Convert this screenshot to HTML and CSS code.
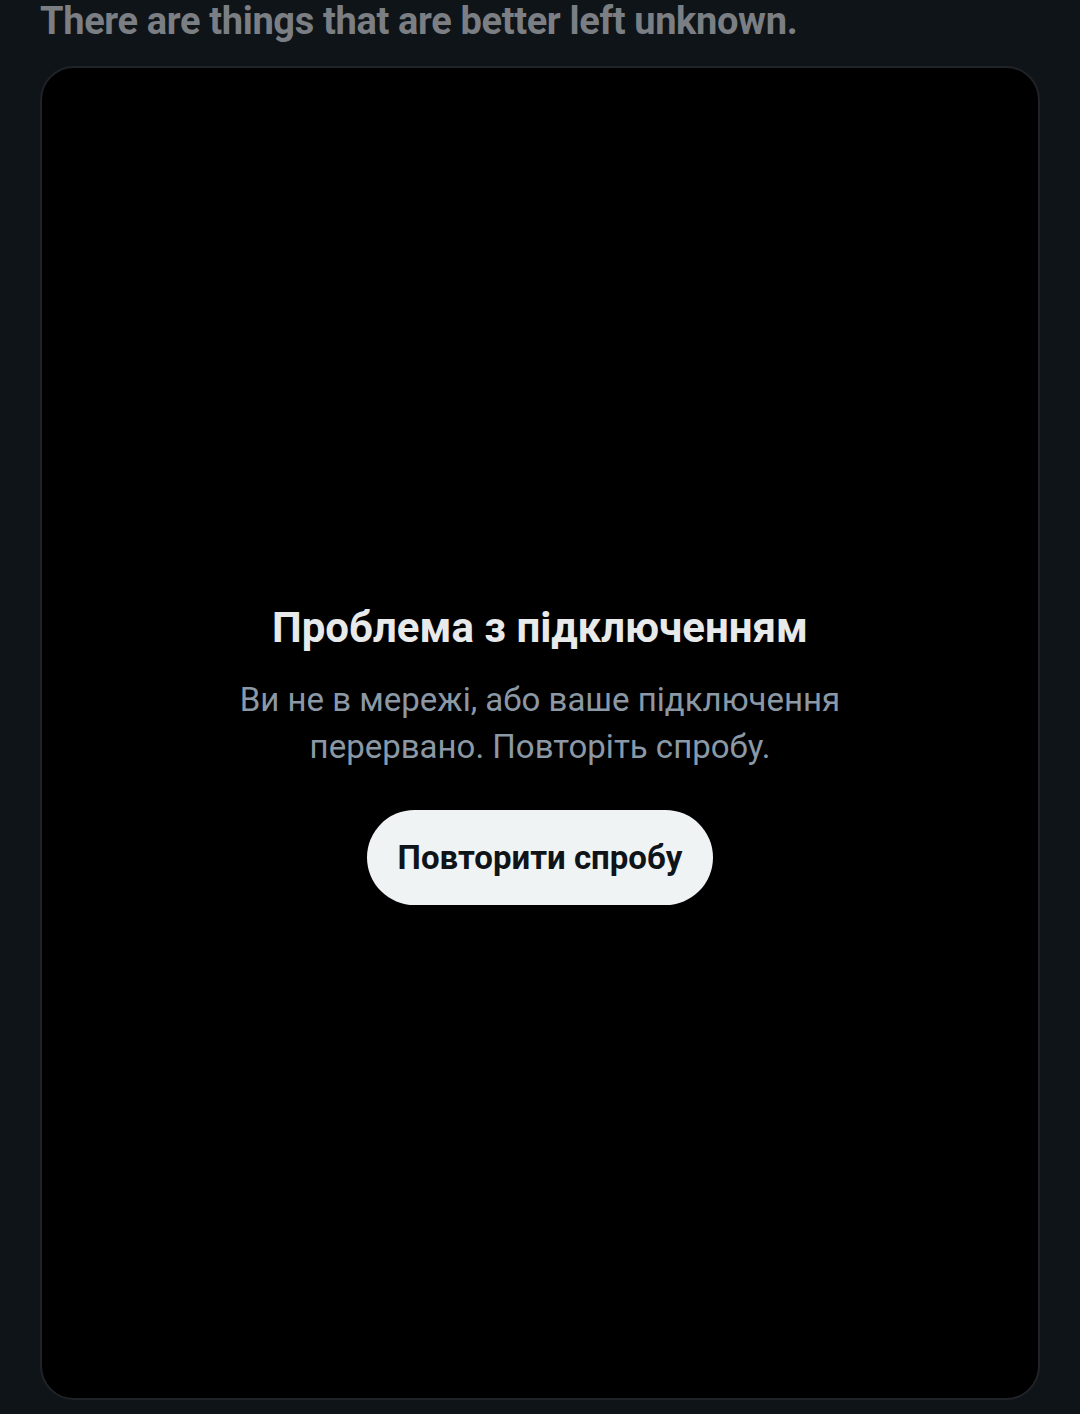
FILE: index.html
```html
<!DOCTYPE html>
<html lang="uk">
  <head>
    <meta charset="UTF-8" />
    <meta name="viewport" content="width=device-width, initial-scale=1.0" />
    <title>Проблема з підключенням</title>
    <link rel="stylesheet" href="styles.css">
  </head>
  <body>
    <div class="page">
      <p class="tweet-text">There are things that are better left unknown.</p>

      <div class="media-card">
        <div class="error-box">
          <h2>Проблема з підключенням</h2>
          <p>Ви не в мережі, або ваше підключення перервано. Повторіть спробу.</p>
          <button class="retry">Повторити спробу</button>
        </div>
      </div>
    </div>
  </body>
</html>
```

FILE: styles.css
```css
html,
body {
  margin: 0;
  padding: 0;
  background-color: #0f1419;
  font-family: Roboto, "Noto Sans", Arial, sans-serif;
}
.page {
  width: 1080px;
  height: 1414px;
  overflow: hidden;
  padding: 0 40px;
  box-sizing: border-box;
}
.tweet-text {
  margin: 0;
  height: 66px;
  font-size: 38px;
  line-height: 42px;
  font-weight: 700;
  letter-spacing: -0.35px;
  color: #7b7f83;
}
.media-card {
  height: 1334px;
  background-color: #000;
  border: 2px solid #202327;
  border-radius: 34px;
  box-sizing: border-box;
  display: flex;
  align-items: center;
  justify-content: center;
}
.error-box {
  width: 680px;
  text-align: center;
  margin-top: 41px;
}
.error-box h2 {
  margin: 0;
  font-size: 42px;
  line-height: 52px;
  font-weight: 700;
  color: #e7e9ea;
}
.error-box p {
  margin: 22px 0 0;
  font-size: 33px;
  line-height: 47px;
  color: #8b98a5;
}
.retry {
  margin-top: 40px;
  width: 346px;
  height: 95px;
  border: none;
  border-radius: 48px;
  background-color: #eff3f4;
  color: #0f1419;
  font-family: Roboto, "Noto Sans", Arial, sans-serif;
  font-size: 33px;
  font-weight: 700;
}
```
